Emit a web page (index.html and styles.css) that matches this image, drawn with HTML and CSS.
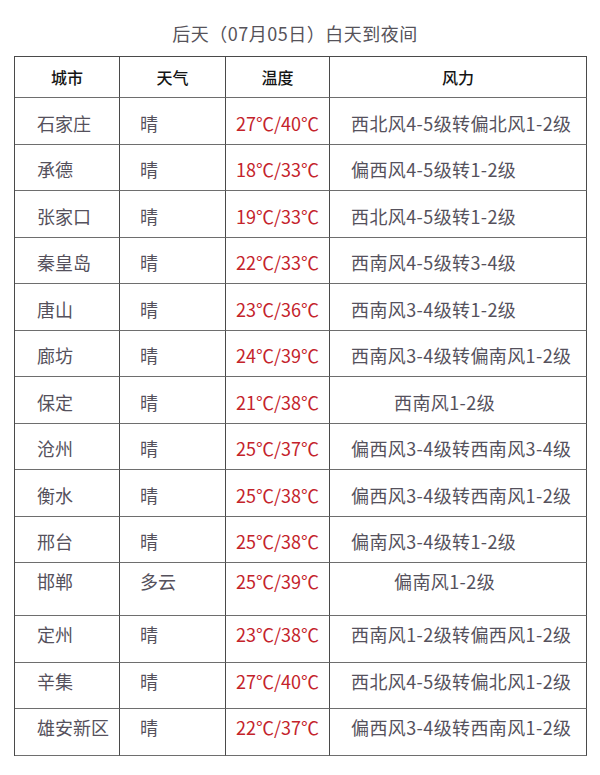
FILE: index.html
```html
<!DOCTYPE html>
<html lang="zh-CN">
<head>
<meta charset="utf-8">
<title>后天（07月05日）白天到夜间</title>
<link rel="stylesheet" href="styles.css">
</head>
<body>
<div class="title">后天（07月05日）白天到夜间</div>
<table class="weather">
  <thead>
    <tr class="head">
      <th class="c1">城市</th>
      <th class="c2">天气</th>
      <th class="c3">温度</th>
      <th class="c4">风力</th>
    </tr>
  </thead>
  <tbody>
    <tr><td class="c1">石家庄</td><td class="c2">晴</td><td class="c3 temp">27℃/40℃</td><td class="c4">西北风4-5级转偏北风1-2级</td></tr>
    <tr><td class="c1">承德</td><td class="c2">晴</td><td class="c3 temp">18℃/33℃</td><td class="c4">偏西风4-5级转1-2级</td></tr>
    <tr><td class="c1">张家口</td><td class="c2">晴</td><td class="c3 temp">19℃/33℃</td><td class="c4">西北风4-5级转1-2级</td></tr>
    <tr><td class="c1">秦皇岛</td><td class="c2">晴</td><td class="c3 temp">22℃/33℃</td><td class="c4">西南风4-5级转3-4级</td></tr>
    <tr><td class="c1">唐山</td><td class="c2">晴</td><td class="c3 temp">23℃/36℃</td><td class="c4">西南风3-4级转1-2级</td></tr>
    <tr><td class="c1">廊坊</td><td class="c2">晴</td><td class="c3 temp">24℃/39℃</td><td class="c4">西南风3-4级转偏南风1-2级</td></tr>
    <tr><td class="c1">保定</td><td class="c2">晴</td><td class="c3 temp">21℃/38℃</td><td class="c4 mid">西南风1-2级</td></tr>
    <tr><td class="c1">沧州</td><td class="c2">晴</td><td class="c3 temp">25℃/37℃</td><td class="c4">偏西风3-4级转西南风3-4级</td></tr>
    <tr><td class="c1">衡水</td><td class="c2">晴</td><td class="c3 temp">25℃/38℃</td><td class="c4">偏西风3-4级转西南风1-2级</td></tr>
    <tr><td class="c1">邢台</td><td class="c2">晴</td><td class="c3 temp">25℃/38℃</td><td class="c4">偏南风3-4级转1-2级</td></tr>
    <tr class="top tall"><td class="c1">邯郸</td><td class="c2">多云</td><td class="c3 temp">25℃/39℃</td><td class="c4 mid">偏南风1-2级</td></tr>
    <tr class="top"><td class="c1">定州</td><td class="c2">晴</td><td class="c3 temp">23℃/38℃</td><td class="c4">西南风1-2级转偏西风1-2级</td></tr>
    <tr class="top"><td class="c1">辛集</td><td class="c2">晴</td><td class="c3 temp">27℃/40℃</td><td class="c4">西北风4-5级转偏北风1-2级</td></tr>
    <tr class="top"><td class="c1">雄安新区</td><td class="c2">晴</td><td class="c3 temp">22℃/37℃</td><td class="c4">偏西风3-4级转西南风1-2级</td></tr>
  </tbody>
</table>
</body>
</html>
```

FILE: styles.css
```css
html, body {
  margin: 0;
  padding: 0;
  background: #ffffff;
}

body {
  width: 600px;
  font-family: "Noto Sans CJK SC", "Noto Sans", sans-serif;
  color: #55515c;
}

.title {
  padding: 21px 10px 0 0;
  height: 24px;
  margin-bottom: 11px;
  line-height: 24px;
  font-size: 18px;
  letter-spacing: 0.5px;
  text-align: center;
  color: #56535a;
}

.weather {
  margin-left: 14px;
  width: 573px;
  table-layout: fixed;
  border-collapse: separate;
  border-spacing: 0;
  border-top: 1px solid #4a4a4a;
  border-left: 1px solid #4a4a4a;
}

.weather th,
.weather td {
  box-sizing: border-box;
  padding: 0;
  border-right: 1px solid #4a4a4a;
  border-bottom: 1px solid #6e6e6e;
  line-height: 24px;
  white-space: nowrap;
}

.weather th {
  font-size: 16px;
  font-weight: 500;
  color: #151515;
  text-align: center;
  vertical-align: middle;
}

.weather td {
  font-size: 18px;
  text-align: left;
  vertical-align: middle;
  padding-top: 4px;
}

.head {
  height: 41px;
}

tbody tr {
  height: 46.5px;
}

tbody tr.tall {
  height: 53px;
}

tbody tr.top td {
  vertical-align: top;
  padding-top: 6px;
}

.c1 { width: 105px; }
.c2 { width: 106px; }
.c3 { width: 104px; }
.c4 { width: 257px; }

td.c1 { padding-left: 22px; }
td.c2 { padding-left: 20px; }
td.c3 { padding-left: 10px; }
td.c4 { padding-left: 21px; letter-spacing: 0.4px; }
td.c4.mid { padding-left: 64px; }

.temp {
  color: #c4232b;
}
```
